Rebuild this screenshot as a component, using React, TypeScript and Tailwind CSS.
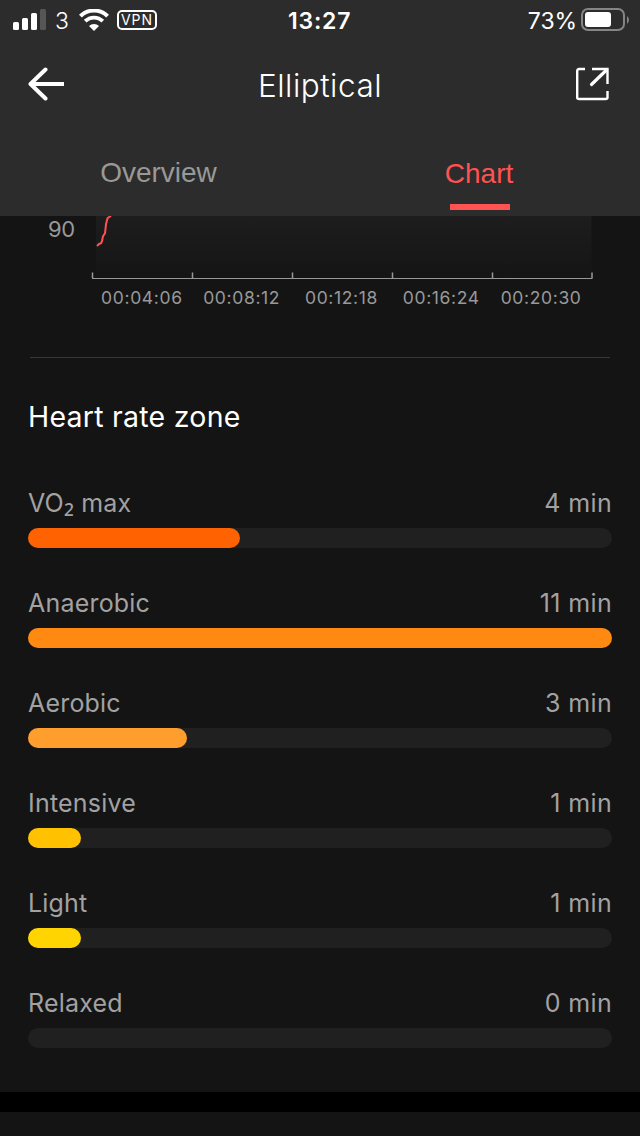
const zones = [
  { label: "VO₂ max", minutes: 4, color: "bg-[#ff6200]" },
  { label: "Anaerobic", minutes: 11, color: "bg-[#ff8911]" },
  { label: "Aerobic", minutes: 3, color: "bg-[#ff9d2d]" },
  { label: "Intensive", minutes: 1, color: "bg-[#ffc100]" },
  { label: "Light", minutes: 1, color: "bg-[#ffd400]" },
  { label: "Relaxed", minutes: 0, color: "bg-[#ffe000]" },
];

const times = ["00:04:06", "00:08:12", "00:12:18", "00:16:24", "00:20:30"];

function StatusBar() {
  return (
    <div className="grid h-10 grid-cols-[1fr_auto_1fr] items-center pr-[11px] pl-[13px] text-[22px] leading-9">
      <div className="flex items-center">
        <svg width="33" height="21" viewBox="0 0 33 21" fill="#fff" className="-mt-px block">
          <rect x="0" y="13" width="6" height="8" rx="1.5" />
          <rect x="9" y="9" width="6" height="12" rx="1.5" />
          <rect x="18" y="4" width="6" height="17" rx="1.5" />
          <rect x="27" y="0" width="6" height="21" rx="1.5" opacity=".2" />
        </svg>
        <span className="ml-[9px] w-6 pt-0.5 text-[23px] font-[350]">3</span>
        <svg width="30" height="22" viewBox="0 0 30 22" fill="none" stroke="#fff" className="block">
          <path d="M1.4 7.2a19.2 19.2 0 0 1 27.2 0" strokeWidth="4" />
          <path d="M6.2 12.2a12.4 12.4 0 0 1 17.6 0" strokeWidth="3.8" />
          <path d="M10 17a7 7 0 0 1 10 0l-5 5z" fill="#fff" stroke="none" />
        </svg>
        <span className="ml-2 flex h-5 w-10 items-center justify-center rounded-[5px] border-2 border-white text-[14px] leading-none font-normal tracking-[0.9px]">
          VPN
        </span>
      </div>
      <span className="w-[66px] pt-0.5 text-[23px] font-semibold tracking-[0.8px]">13:27</span>
      <div className="flex items-center justify-end">
        <span className="pt-0.5 text-[23px] font-normal tracking-[-0.1px]">73%</span>
        <svg width="48" height="24" viewBox="0 0 48 24" className="ml-1 block">
          <rect x="1" y="1" width="42" height="21" rx="6" fill="none" stroke="#858585" strokeWidth="2" />
          <rect x="4" y="4" width="26" height="15" rx="3" fill="#fff" />
          <path d="M46 8q2 1.5 2 4t-2 4z" fill="#858585" />
        </svg>
      </div>
    </div>
  );
}

function Header() {
  return (
    <header className="h-54 bg-[#2c2c2c]">
      <StatusBar />
      <div className="flex h-[88px] items-center justify-between px-7">
        <svg width="40" height="36" viewBox="0 0 40 36" fill="none" stroke="#fff" strokeWidth="4" className="block">
          <path d="M17.5 3.5 2.5 18 17.5 32.5" strokeLinecap="round" strokeLinejoin="round" />
          <path d="M2.5 18H36" />
        </svg>
        <h1 className="pt-[3px] pr-1 text-[31.5px] font-[350] tracking-[0.5px]">Elliptical</h1>
        <svg width="36" height="34" viewBox="0 0 36 34" fill="none" stroke="#fff" strokeWidth="2.4" className="block">
          <path d="M9 2H3.2Q1.2 2 1.2 4v26.500q0 1.500 2 1.500H29.500q2 0 2-1.500v-6.500M16 2h15.500v15" />
          <path d="M30.500 3 15.500 17.500" strokeWidth="3.200" strokeLinecap="round" />
        </svg>
      </div>
      <nav className="grid h-[88px] grid-cols-2 font-['Liberation_Sans',Arial,sans-serif] text-[28px]">
        <span className="pt-6 pr-[3px] text-center leading-[42px] text-[#999]">Overview</span>
        <span className="flex flex-col items-center pt-[25px] leading-[42px] text-[#ff5252]">
          <span className="pr-0.5">Chart</span>
          <span className="mt-[9px] h-1.5 w-15 bg-[#ff5252]" />
        </span>
      </nav>
    </header>
  );
}

function HeartRateChart() {
  return (
    <section className="h-[141px]">
      <div className="flex h-[63px]">
        <span className="w-[91px] pl-12 text-[22px] leading-[27px] font-normal tracking-[-0.3px] text-[#999]">90</span>
        <svg width="502" height="63" viewBox="91 216 502 63" fill="none" className="block">
          <defs>
            <linearGradient id="plot" x1="0" y1="0" x2="0" y2="1">
              <stop offset="0" stopColor="#1d1d1d" />
              <stop offset="1" stopColor="#151515" />
            </linearGradient>
          </defs>
          <rect x="96" y="216" width="495.5" height="62" fill="url(#plot)" />
          <path d="M97 246l2-2 2-.7 1-2 1-5 2-3 1-9 1.5-6 3.5-2.6" stroke="#ff5252" strokeWidth="2" strokeLinejoin="round" />
          <path d="M92.5 272.5V278M192.5 272.5V278M292.5 272.5V278M392.5 272.5V278M492.5 272.5V278M592 272.5V278" stroke="#999" strokeWidth="1.5" />
          <path d="M92 278.5H592.5" stroke="#999" />
        </svg>
      </div>
      <div className="ml-[92px] grid w-[500px] grid-cols-5 pr-px text-center text-[17.5px] leading-[37px] font-normal tracking-[0.65px] text-[#999]">
        {times.map((time) => (
          <span key={time}>{time}</span>
        ))}
      </div>
    </section>
  );
}

function ZoneRow({ label, minutes, color }: (typeof zones)[number]) {
  const [start, end] = label.split("₂");
  return (
    <div className="h-[100px]">
      <div className="flex h-12 items-center justify-between text-[25px] font-normal text-[#a2a2a2]">
        <span className="tracking-[0.2px]">
          {start}
          {end && (
            <span className="font-['Open_Sans',sans-serif] text-[29px] leading-none font-medium tracking-normal">₂</span>
          )}
          {end}
        </span>
        <span className="tracking-[0.35px]">{minutes} min</span>
      </div>
      <div className="h-5 rounded-[10px] bg-[#202020]">
        <div className={`h-5 rounded-[10px] ${color}`} style={{ width: `${(minutes / 11) * 100}%` }} />
      </div>
    </div>
  );
}

export default function App() {
  return (
    <div className="h-[1136px] w-[640px] overflow-hidden bg-[#141414] font-[Inter,sans-serif] text-white">
      <Header />
      <main className="h-[876px]">
        <HeartRateChart />
        <div className="mx-[30px] h-px bg-[#383838]" />
        <section className="px-7 pt-[38px]">
          <h2 className="mb-[42px] text-[28.5px] leading-[42px] font-normal tracking-[0.25px]">Heart rate zone</h2>
          {zones.map((zone) => (
            <ZoneRow key={zone.label} {...zone} />
          ))}
        </section>
      </main>
      <div className="h-5 bg-black" />
    </div>
  );
}
